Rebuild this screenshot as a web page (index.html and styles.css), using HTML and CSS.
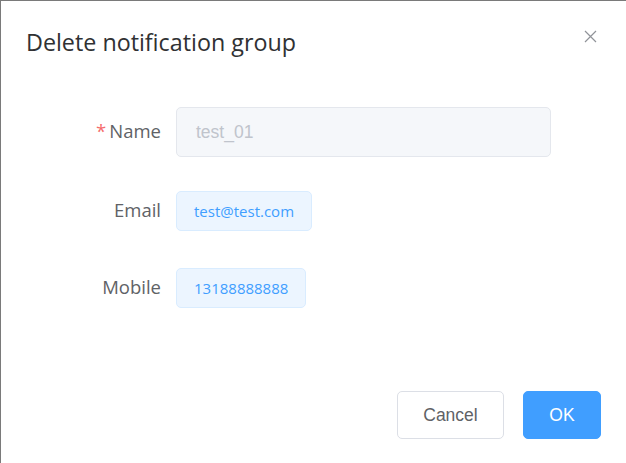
FILE: index.html
```html
<!DOCTYPE html>
<html>
<head>
<meta charset="utf-8">
<link rel="stylesheet" href="styles.css">
</head>
<body>
<div class="dialog">
  <div class="header">
    <span class="title">Delete notification group</span>
    <button class="close" aria-label="Close">
      <svg width="13" height="13" viewBox="0 0 13 13"><path d="M1 1L12 12M12 1L1 12" stroke="#909399" stroke-width="1.2" fill="none"/></svg>
    </button>
  </div>
  <div class="body">
    <div class="row row-name">
      <label class="label"><span class="req">*</span>Name</label>
      <div class="control"><div class="input">test_01</div></div>
    </div>
    <div class="row row-email">
      <label class="label">Email</label>
      <div class="control"><span class="tag">test@test.com</span></div>
    </div>
    <div class="row row-mobile">
      <label class="label">Mobile</label>
      <div class="control"><span class="tag">13188888888</span></div>
    </div>
  </div>
  <div class="footer">
    <button class="btn btn-default">Cancel</button>
    <button class="btn btn-primary">OK</button>
  </div>
</div>
</body>
</html>
```
FILE: styles.css
```css
* { box-sizing: border-box; }
html, body { margin: 0; padding: 0; background: #fff; }
.dialog {
  width: 626px;
  height: 463px;
  border-top: 1px solid #7a7a7a;
  border-left: 1px solid #7a7a7a;
  background: #fff;
  display: flex;
  flex-direction: column;
  font-family: "Open Sans", "Noto Sans", sans-serif;
}
.header {
  display: flex;
  justify-content: space-between;
  align-items: center;
  padding: 25px 27px 0 25px;
  height: 56px;
}
.title {
  font-size: 23.3px;
  line-height: 30px;
  color: #303133;
}
.close {
  border: 0;
  background: none;
  padding: 0;
  width: 18px;
  height: 18px;
  display: flex;
  align-items: center;
  justify-content: center;
  margin-top: -10px;
}
.body {
  padding: 50px 0 0 0;
  flex: 1;
}
.row {
  display: flex;
  align-items: center;
  height: 50px;
}
.row-email { margin-top: 29px; }
.row-mobile { margin-top: 27px; }
.label {
  width: 160px;
  text-align: right;
  font-size: 18.5px;
  color: #606266;
  margin-right: 15px;
  padding-bottom: 3px;
}
.req { color: #f56c6c; margin-right: 3px; }
.input {
  width: 375px;
  height: 50px;
  border: 1px solid #e4e7ed;
  background: #f5f7fa;
  border-radius: 5px;
  color: #c0c4cc;
  font-family: "Liberation Sans", Arial, sans-serif;
  font-size: 17.5px;
  line-height: 48px;
  padding: 0 19px;
}
.tag {
  display: inline-block;
  height: 40px;
  line-height: 38px;
  padding: 0 17px;
  background: #ecf5ff;
  border: 1px solid #d9ecff;
  border-radius: 5px;
  color: #409eff;
  font-size: 15px;
}
.footer {
  display: flex;
  justify-content: flex-end;
  gap: 19px;
  padding: 0 25px 24px 0;
}
.btn {
  height: 48px;
  font-family: "Liberation Sans", Arial, sans-serif;
  font-size: 17.5px;
  border-radius: 5px;
  cursor: pointer;
}
.btn-default {
  width: 107px;
  background: #fff;
  border: 1px solid #dcdfe6;
  color: #606266;
}
.btn-primary {
  width: 78px;
  background: #409eff;
  border: 1px solid #409eff;
  color: #fff;
}
```
